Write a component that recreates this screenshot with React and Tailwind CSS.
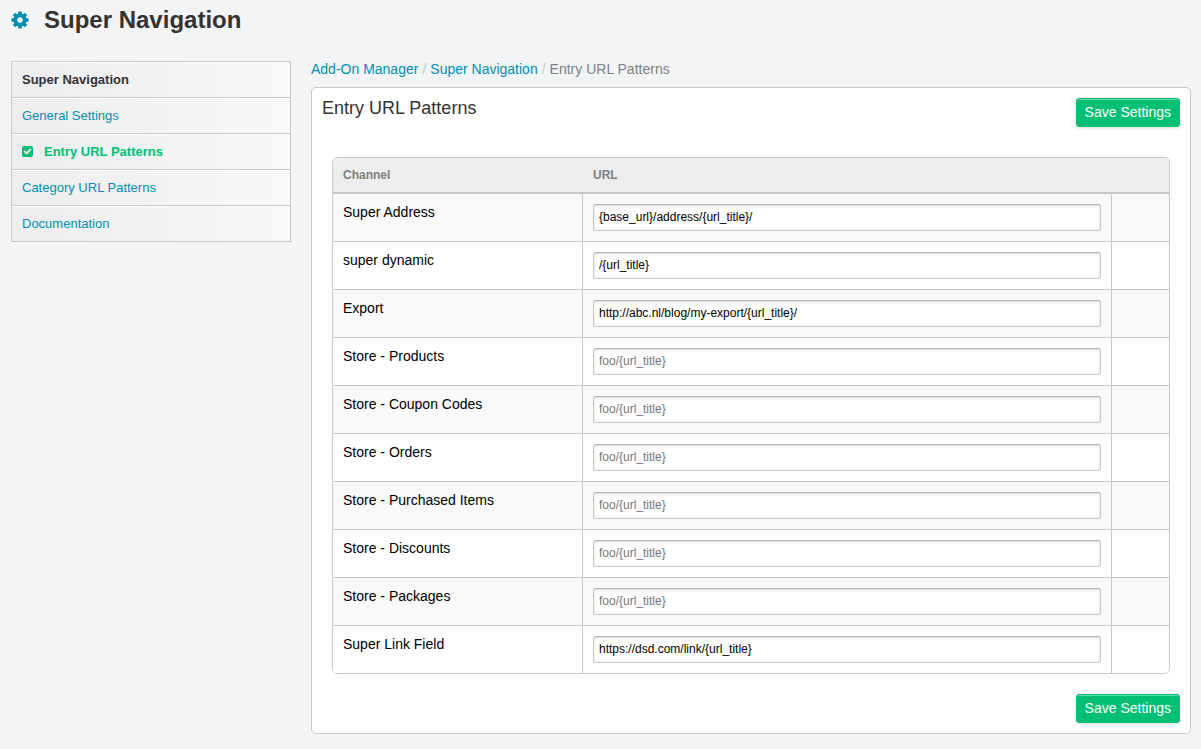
import { useState } from "react";

const channels = [
    { id: 1, name: 'Super Address', url: '{base_url}/address/{url_title}/' },
    { id: 2, name: 'super dynamic', url: '/{url_title}' },
    { id: 3, name: 'Export', url: 'http://abc.nl/blog/my-export/{url_title}/' },
    { id: 4, name: 'Store - Products', url: '' },
    { id: 5, name: 'Store - Coupon Codes', url: '' },
    { id: 6, name: 'Store - Orders', url: '' },
    { id: 7, name: 'Store - Purchased Items', url: '' },
    { id: 8, name: 'Store - Discounts', url: '' },
    { id: 9, name: 'Store - Packages', url: '' },
    { id: 10, name: 'Super Link Field', url: 'https://dsd.com/link/{url_title}' },
];

const menu = ['General Settings', 'Entry URL Patterns', 'Category URL Patterns', 'Documentation'];

const CogIcon = () => (
    <svg viewBox="0 0 1792 1792" className="size-5 shrink-0 fill-[#048fae]" aria-hidden="true">
        <path d="M1152 896q0-106-75-181t-181-75-181 75-75 181 75 181 181 75 181-75 75-181zm512-109v222q0 12-8 23t-20 13l-185 28q-19 54-39 91 35 50 107 138 10 12 10 25t-9 23q-27 37-99 108t-94 71q-12 0-26-9l-138-108q-44 23-91 38-16 136-29 186-7 28-36 28h-222q-14 0-24.500-8.500t-11.500-21.500l-28-184q-49-16-90-37l-141 107q-10 9-25 9-14 0-25-11-126-114-165-168-7-10-7-23 0-12 8-23 15-21 51-66.500t54-70.500q-27-50-41-99l-183-27q-13-2-21-12.500t-8-23.500v-222q0-12 8-23t19-13l186-28q14-46 39-92-40-57-107-138-10-12-10-24 0-10 9-23 26-36 98.500-107.500t94.500-71.500q13 0 26 10l138 107q44-23 91-38 16-136 29-186 7-28 36-28h222q14 0 24.500 8.500t11.500 21.500l28 184q49 16 90 37l142-107q9-9 24-9 13 0 25 10 129 119 165 170 7 8 7 22 0 12-8 23-15 21-51 66.500t-54 70.500q26 50 41 98l183 28q13 2 21 12.500t8 23.500z" />
    </svg>
);

const CheckIcon = () => (
    <svg viewBox="128 128 1536 1536" className="size-[11px] shrink-0 fill-[#01bf75]" aria-hidden="true">
        <path d="M813 1299l614-614q19-19 19-45t-19-45l-102-102q-19-19-45-19t-45 19l-467 467-211-211q-19-19-45-19t-45 19l-102 102q-19 19-19 45t19 45l358 358q19 19 45 19t45-19zm851-883v960q0 119-84.500 203.500t-203.500 84.500h-960q-119 0-203.500-84.500t-84.500-203.500v-960q0-119 84.500-203.500t203.500-84.500h960q119 0 203.500 84.500t84.500 203.500z" />
    </svg>
);

const SaveButton = () => (
    <button
        type="submit"
        className="h-[29px] shrink-0 rounded-[3px] border border-[#01bf75] bg-[#01bf75] px-2 pb-0.5 text-[14px] leading-5 text-white shadow-[inset_0_1px_0_#5fd8a8,0_1px_4px_rgba(0,0,0,0.15)]"
    >
        Save Settings
    </button>
);

const Sidebar = () => (
    <nav className="w-[280px] shrink-0 border border-b-0 border-[#c8c8c8] bg-linear-to-r from-[#ededed] to-[#f9f9f9] text-[13px]">
        <h2 className="flex h-9 items-center border-b border-[#c8c8c8] px-2.5 font-bold text-[#333] shadow-[inset_0_1px_0_#fff]">
            Super Navigation
        </h2>
        <ul>
            {menu.map(item => (
                <li key={item} className="border-b border-[#c8c8c8] shadow-[inset_0_1px_0_#fff]">
                    <a
                        href="#"
                        className={`flex h-[35px] items-center gap-[11px] px-2.5 ${item === 'Entry URL Patterns' ? 'font-bold text-[#01bf75]' : 'text-[#048fae]'}`}
                    >
                        {item === 'Entry URL Patterns' && <CheckIcon />}
                        {item}
                    </a>
                </li>
            ))}
        </ul>
    </nav>
);

const PatternTable = () => {
    const [rows, setRows] = useState(channels);

    const updateUrl = (id, url) => {
        setRows(rows.map(row => (row.id === id ? { ...row, url } : row)));
    };

    return (
        <div className="overflow-hidden rounded-[5px] border border-[#c8c8c8]">
            <table className="w-full table-fixed border-separate border-spacing-0">
                <thead>
                    <tr className="h-9 bg-[#ededed] text-left text-xs text-[#808080]">
                        <th className="w-[250px] border-b-2 border-[#c8c8c8] px-2.5">Channel</th>
                        <th className="border-b-2 border-[#c8c8c8] px-2.5">URL</th>
                        <th className="w-[57px] border-b-2 border-[#c8c8c8]"></th>
                    </tr>
                </thead>
                <tbody className="[&>tr:last-child>td]:border-b-0">
                    {rows.map(row => (
                        <tr key={row.id} className="bg-white odd:bg-[#f9f9f9]">
                            <td className="border-r border-b border-[#c8c8c8] px-2.5 py-2 align-top text-[14px] leading-5 text-black">
                                <label htmlFor={`url-${row.id}`}>{row.name}</label>
                            </td>
                            <td className="border-r border-b border-[#c8c8c8] p-2.5">
                                <input
                                    id={`url-${row.id}`}
                                    type="text"
                                    value={row.url}
                                    placeholder="foo/{url_title}"
                                    onChange={(e) => updateUrl(row.id, e.target.value)}
                                    className="block h-[27px] w-full rounded-[3px] border border-[#c8c8c8] border-t-[#b0b0b0] bg-white px-[5px] pb-0.5 text-xs text-black shadow-[inset_0_1px_3px_rgba(0,0,0,0.15)] placeholder:text-[#757575]"
                                />
                            </td>
                            <td className="border-b border-[#c8c8c8]"></td>
                        </tr>
                    ))}
                </tbody>
            </table>
        </div>
    );
};

export default function App() {
    return (
        <div className="min-h-screen bg-[#f2f4f6] px-2.5 pb-[15px] font-['Liberation_Sans',Arial,sans-serif]">
            <header className="flex h-10 items-center gap-3.5">
                <CogIcon />
                <h1 className="text-2xl font-bold text-[#333]">Super Navigation</h1>
            </header>

            <div className="mt-[21px] flex items-start gap-5 pl-px">
                <Sidebar />

                <main className="min-w-0 flex-1">
                    <nav className="mb-2.5 flex gap-1 text-[14px] leading-4 text-[#808080]">
                        <a href="#" className="text-[#048fae]">Add-On Manager</a>
                        <span className="text-[#c8c8c8]">/</span>
                        <a href="#" className="text-[#048fae]">Super Navigation</a>
                        <span className="text-[#c8c8c8]">/</span>
                        <span>Entry URL Patterns</span>
                    </nav>

                    <form
                        className="rounded-[5px] border border-[#c8c8c8] bg-white p-2.5"
                        onSubmit={(e) => e.preventDefault()}
                    >
                        <div className="flex items-start justify-between">
                            <h2 className="text-lg leading-5 text-[#333]">Entry URL Patterns</h2>
                            <SaveButton />
                        </div>
                        <div className="px-2.5 pt-[30px] pb-5">
                            <PatternTable />
                        </div>
                        <div className="flex justify-end">
                            <SaveButton />
                        </div>
                    </form>
                </main>
            </div>
        </div>
    );
}
